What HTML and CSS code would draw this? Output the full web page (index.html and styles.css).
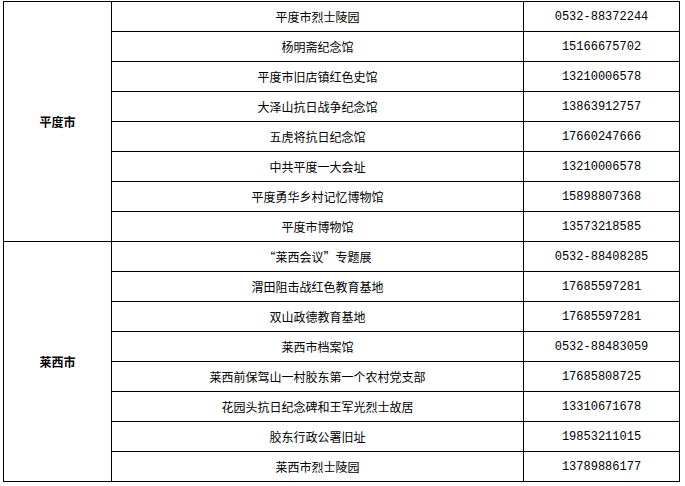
FILE: index.html
```html
<!DOCTYPE html>
<html lang="zh-CN">
<head>
<meta charset="utf-8">
<title>红色教育基地</title>
<link rel="stylesheet" href="styles.css">
</head>
<body>
<table class="sites">
  <colgroup>
    <col class="col-region">
    <col class="col-name">
    <col class="col-phone">
  </colgroup>
  <tbody>
    <tr><td class="region" rowspan="8">平度市</td><td class="name">平度市烈士陵园</td><td class="phone">0532-88372244</td></tr>
    <tr><td class="name">杨明斋纪念馆</td><td class="phone">15166675702</td></tr>
    <tr><td class="name">平度市旧店镇红色史馆</td><td class="phone">13210006578</td></tr>
    <tr><td class="name">大泽山抗日战争纪念馆</td><td class="phone">13863912757</td></tr>
    <tr><td class="name">五虎将抗日纪念馆</td><td class="phone">17660247666</td></tr>
    <tr><td class="name">中共平度一大会址</td><td class="phone">13210006578</td></tr>
    <tr><td class="name">平度勇华乡村记忆博物馆</td><td class="phone">15898807368</td></tr>
    <tr><td class="name">平度市博物馆</td><td class="phone">13573218585</td></tr>
    <tr><td class="region" rowspan="8">莱西市</td><td class="name">“莱西会议”专题展</td><td class="phone">0532-88408285</td></tr>
    <tr><td class="name">渭田阻击战红色教育基地</td><td class="phone">17685597281</td></tr>
    <tr><td class="name">双山政德教育基地</td><td class="phone">17685597281</td></tr>
    <tr><td class="name">莱西市档案馆</td><td class="phone">0532-88483059</td></tr>
    <tr><td class="name">莱西前保驾山一村胶东第一个农村党支部</td><td class="phone">17685808725</td></tr>
    <tr><td class="name">花园头抗日纪念碑和王军光烈士故居</td><td class="phone">13310671678</td></tr>
    <tr><td class="name">胶东行政公署旧址</td><td class="phone">19853211015</td></tr>
    <tr><td class="name">莱西市烈士陵园</td><td class="phone">13789886177</td></tr>
  </tbody>
</table>
</body>
</html>
```
FILE: styles.css
```css
html, body {
  margin: 0;
  padding: 0;
  background: #ffffff;
}

body {
  padding: 1px 0 0 3px;
  font-family: "Liberation Mono", "Noto Sans CJK SC", monospace;
  font-size: 12px;
  color: #000000;
}

.sites {
  table-layout: fixed;
  border-collapse: separate;
  border-spacing: 1px;
  background: #000000;
  width: 677px;
}

.col-region { width: 107px; }
.col-name { width: 411px; }
.col-phone { width: 155px; }

.sites td {
  background: #ffffff;
  height: 29px;
  padding: 0;
  text-align: center;
  vertical-align: middle;
  line-height: 14px;
  white-space: nowrap;
}

.sites td.name,
.sites td.region {
  font-family: "Noto Sans CJK SC", sans-serif;
}

.sites td.region {
  font-weight: bold;
}
```
